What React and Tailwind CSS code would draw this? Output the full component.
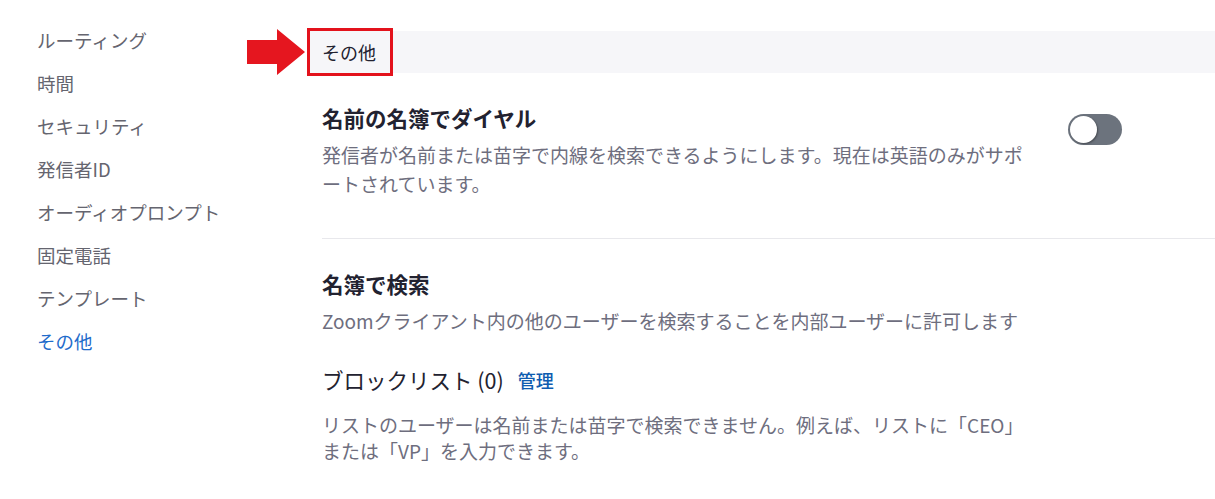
import React from "react";

// Left menu
const menu = [
    "ルーティング",
    "時間",
    "セキュリティ",
    "発信者ID",
    "オーディオプロンプト",
    "固定電話",
    "テンプレート",
    "その他",
];

function Toggle() {
    return (
        <div className="flex items-center w-[54px] h-[31px] rounded-full bg-[#6c737d] px-[2px] shrink-0">
            <div className="w-[27px] h-[27px] rounded-full bg-white shadow-[1px_1px_2px_rgba(0,0,0,0.35)]" />
        </div>
    );
}

function Arrow() {
    return (
        <svg width="58" height="46" viewBox="0 0 58 46" className="shrink-0">
            <polygon points="0,11 30,11 30,0 58,23 30,46 30,35 0,35" fill="#e5161f" />
        </svg>
    );
}

export default function App() {
    return (
        <div
            className="flex w-full h-[499px] bg-white overflow-hidden"
            style={{ fontFamily: '"Noto Sans CJK JP", "Noto Sans", sans-serif' }}
        >
            {/* Sidebar */}
            <nav className="w-[247px] shrink-0 pl-[37px] pt-[19px]">
                {menu.map((item, i) => (
                    <div
                        key={item}
                        className={`text-[18.5px] leading-[43px] ${
                            i === menu.length - 1 ? "text-[#1f6ccb]" : "text-[#65656f]"
                        }`}
                    >
                        {item}
                    </div>
                ))}
            </nav>

            {/* Main */}
            <main className="flex-1 min-w-0">
                <div className="flex items-center mt-[29px]">
                    <Arrow />
                    <div className="flex-1 flex items-center h-[42px] bg-[#f6f6f9] ml-[2px]">
                        <div className="h-[48px] flex items-center border-[3px] border-[#e3121c] pl-[12px] pr-[14px] text-[18px] text-[#222230]">
                            その他
                        </div>
                    </div>
                </div>

                <div className="ml-[75px]">
                    {/* Section 1 */}
                    <div className="flex justify-between pt-[29px] pb-[40px] border-b border-[#e8e8ec]">
                        <div className="max-w-[712px]">
                            <h2 className="text-[21.5px] leading-[28px] font-bold text-[#222230]">
                                名前の名簿でダイヤル
                            </h2>
                            <p className="mt-[8px] text-[19px] leading-[29px] text-[#6e6e7e]">
                                発信者が名前または苗字で内線を検索できるようにします。現在は英語のみがサポートされています。
                            </p>
                        </div>
                        <div className="pt-[10px] pr-[93px]">
                            <Toggle />
                        </div>
                    </div>

                    {/* Section 2 */}
                    <div className="pt-[31px] max-w-[712px]">
                        <h2 className="text-[21.5px] leading-[28px] font-bold text-[#222230]">
                            名簿で検索
                        </h2>
                        <p className="mt-[8px] text-[19px] leading-[29px] text-[#6e6e7e]">
                            Zoomクライアント内の他のユーザーを検索することを内部ユーザーに許可します
                        </p>
                        <div className="mt-[30px] flex items-center gap-[14px] leading-[30px]">
                            <span className="text-[21.5px] text-[#222230]">ブロックリスト (0)</span>
                            <span className="text-[18px] font-medium text-[#0e5cb0]">管理</span>
                        </div>
                        <p className="mt-[17px] text-[19px] leading-[26px] text-[#6e6e7e]">
                            リストのユーザーは名前または苗字で検索できません。例えば、リストに「CEO」または「VP」を入力できます。
                        </p>
                    </div>
                </div>
            </main>
        </div>
    );
}
